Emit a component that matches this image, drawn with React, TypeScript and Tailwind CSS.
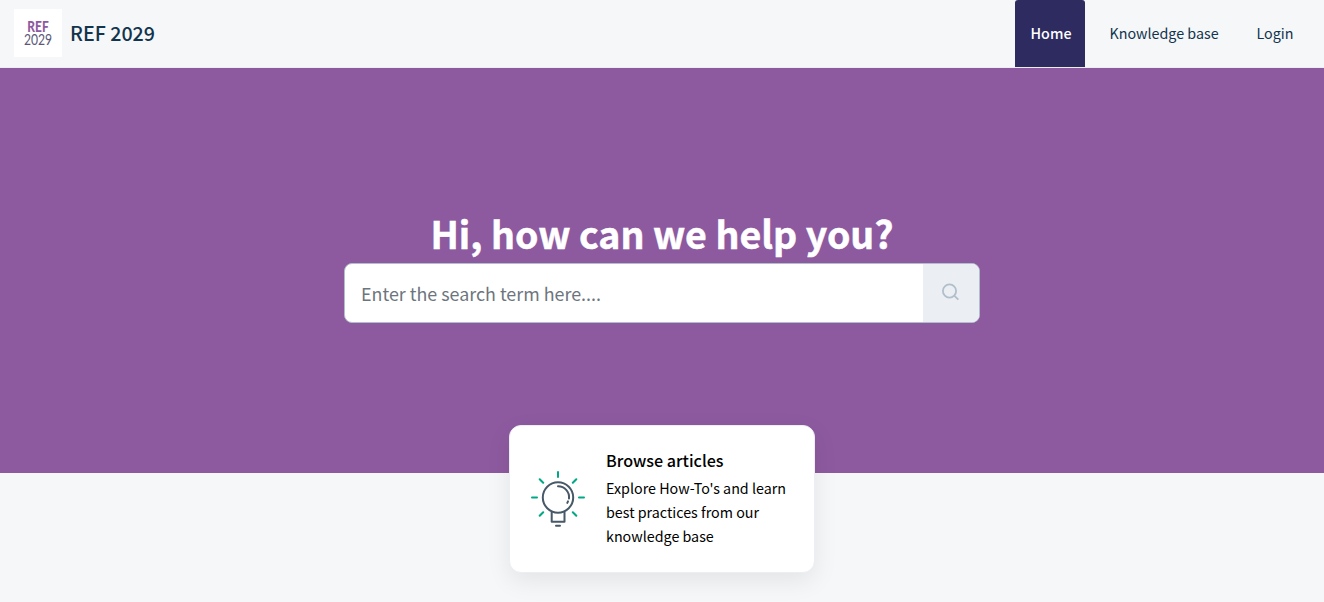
import { useState } from 'react'

interface NavItem {
  label: string
  className: string
}

const navItems: NavItem[] = [
  { label: 'Home', className: 'w-[70px] rounded-t-[3px] bg-[#2d2b5f] pl-0.5 font-medium text-white' },
  { label: 'Knowledge base', className: 'ml-2 w-[141px] pl-px text-[#12344d]' },
  { label: 'Login', className: 'ml-[7px] w-[68px] text-[#12344d]' },
]

function Logo() {
  return (
    <div className="flex h-12 w-12 flex-col items-center justify-center bg-white pb-px font-[Lato] leading-[13px]">
      <span className="h-[13px] scale-x-[0.82] text-[14.5px] font-black text-[#8d5a9f]">REF</span>
      <span className="h-[13px] scale-x-[0.78] text-[15.5px] text-[#5b5878]">2029</span>
    </div>
  )
}

function BulbIcon() {
  return (
    <svg width="54" height="56" viewBox="0 0 54 56" fill="none" strokeWidth="2" strokeLinecap="round">
      <g stroke="#00a886">
        <path d="M27 1v5M1 26.5h5M48 26.5h5M8.7 8.2l3.5 3.5M45.3 8.2l-3.5 3.5M8.7 44.8l3.5-3.5M45.3 44.8l-3.5-3.5" />
      </g>
      <g stroke="#475867" strokeLinejoin="round">
        <circle cx="27" cy="26.5" r="15.2" />
        <path d="M27 15.3a11 11 0 0 1 11 12.2M37 30.3l-.7 1.6" />
        <path d="M20.7 41v9.8h12.8V41M25 54.7h4" />
      </g>
    </svg>
  )
}

function SearchIcon() {
  return (
    <svg width="18" height="18" viewBox="0 0 18 18" fill="none" stroke="#b0bfcb" strokeWidth="1.8">
      <circle cx="7.5" cy="8" r="6.6" />
      <path d="m12.2 12.6 4.2 4" />
    </svg>
  )
}

export default function App() {
  const [term, setTerm] = useState('')

  return (
    <div className="h-[602px] overflow-hidden bg-[#f5f7f9] font-['Noto_Sans_CJK_SC','Noto_Sans',sans-serif] text-black">
      <header className="flex h-[68px] items-start justify-between border-b border-[#ebeef2] pr-[15px] pl-3.5">
        <a href="#" className="flex items-center gap-2 pt-[9px]">
          <Logo />
          <span className="text-[19.65px] leading-7 font-medium text-[#12344d]">REF 2029</span>
        </a>
        <nav className="flex h-[67px]">
          {navItems.map(item => (
            <a key={item.label} href="#" className={`flex items-center justify-center pb-0.5 text-[14.3px] leading-6 whitespace-nowrap ${item.className}`}>
              {item.label}
            </a>
          ))}
        </nav>
      </header>

      <section className="flex h-[405px] flex-col items-center bg-[#8d5a9f] pt-[141px]">
        <h1 className="h-[54px] text-[37.5px] leading-[48px] font-bold whitespace-nowrap text-white [-webkit-text-stroke:0.5px_white]">
          Hi, how can we help you?
        </h1>
        <form className="flex h-[60px] w-[636px] shrink-0 overflow-hidden rounded-lg border border-[#b0bfcb] bg-white">
          <input
            value={term}
            onChange={e => setTerm(e.target.value)}
            placeholder="Enter the search term here...."
            className="min-w-0 flex-1 px-4 text-[17.86px] outline-none placeholder:text-[#6c757d]"
          />
          <button type="button" aria-label="Search" className="flex w-14 items-center justify-center bg-[#ebeef2] pr-px pb-0.5">
            <SearchIcon />
          </button>
        </form>
      </section>

      <main className="-mt-12 flex justify-center">
        <a href="#" className="flex h-[148px] w-[306px] items-center rounded-xl border border-[#ebeef2] bg-white pl-[21px] shadow-[0_8px_24px_rgba(0,0,0,0.08)]">
          <BulbIcon />
          <div className="ml-[21px] flex-1 pb-0.5">
            <h2 className="mb-1 text-[16.1px] leading-6 font-medium">Browse articles</h2>
            <p className="w-[190px] text-[14.3px] leading-6">Explore How-To's and learn best practices from our knowledge base</p>
          </div>
        </a>
      </main>
    </div>
  )
}
